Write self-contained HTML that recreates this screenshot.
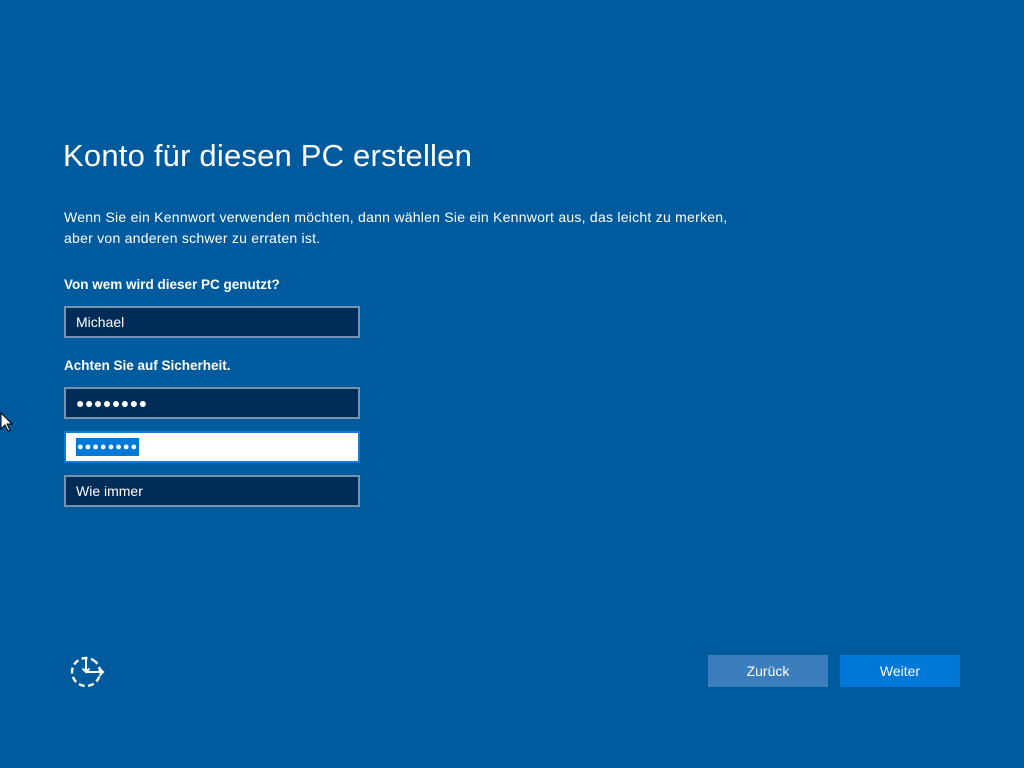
<html><head><style>
body{margin:0;width:1024px;height:768px;background:#005a9e;font-family:"Liberation Sans",sans-serif;color:#fff;position:relative;overflow:hidden}
.a{position:absolute}
h1{position:absolute;left:63px;top:138px;margin:0;font-weight:normal;font-size:31px;letter-spacing:0.2px}
.p{left:64px;top:207px;font-size:14px;line-height:21px;letter-spacing:0.25px;white-space:nowrap}
.l{left:64px;font-size:13.5px;font-weight:bold}
.in{position:absolute;left:64px;height:28px;background:#002c57;border:2px solid #7592b0;box-sizing:content-box;font-size:14px;line-height:28px;padding-left:10px;width:282px}
.in.f{background:#fff;border-color:#0f7ad8}
.d{letter-spacing:0.5px;font-size:14px;font-weight:bold}
.btn{position:absolute;top:655px;width:120px;height:32px;line-height:32px;text-align:center;font-size:14px}
</style></head><body>
<h1>Konto für diesen PC erstellen</h1>
<div class="a p">Wenn Sie ein Kennwort verwenden möchten, dann wählen Sie ein Kennwort aus, das leicht zu merken,<br>aber von anderen schwer zu erraten ist.</div>
<div class="a l" style="top:277px">Von wem wird dieser PC genutzt?</div>
<div class="in" style="top:306px">Michael</div>
<div class="a l" style="top:358px">Achten Sie auf Sicherheit.</div>
<div class="in" style="top:387px"><span class="d">●●●●●●●●</span></div>
<div class="in f" style="top:431px"><span class="d" style="position:absolute;left:10px;top:5px;background:#0078d7;color:#fff;padding:0 1px;font-size:11px;letter-spacing:1px;line-height:18px">●●●●●●●●</span></div>
<div class="in" style="top:475px">Wie immer</div>
<svg class="a" style="left:68px;top:654px" width="40" height="34" viewBox="0 0 40 34"><circle cx="18" cy="18" r="14" fill="none" stroke="#fff" stroke-width="2.4" stroke-dasharray="6 3.5" transform="rotate(-60 18 18)"/><path d="M18 3V18h17M14.5 14.5l3.5 3.5 3.5-3.5M31.5 14.5l3.5 3.5-3.5 3.5" fill="none" stroke="#fff" stroke-width="2"/></svg>
<div class="btn" style="left:708px;background:#3a7ebc">Zurück</div>
<div class="btn" style="left:840px;background:#0078d7">Weiter</div>
<svg class="a" style="left:0;top:412px" width="14" height="22"><path d="M1 1v16l4-4 3 6 2-1-3-6h5z" fill="#fff" stroke="#000"/></svg>
</body></html>
